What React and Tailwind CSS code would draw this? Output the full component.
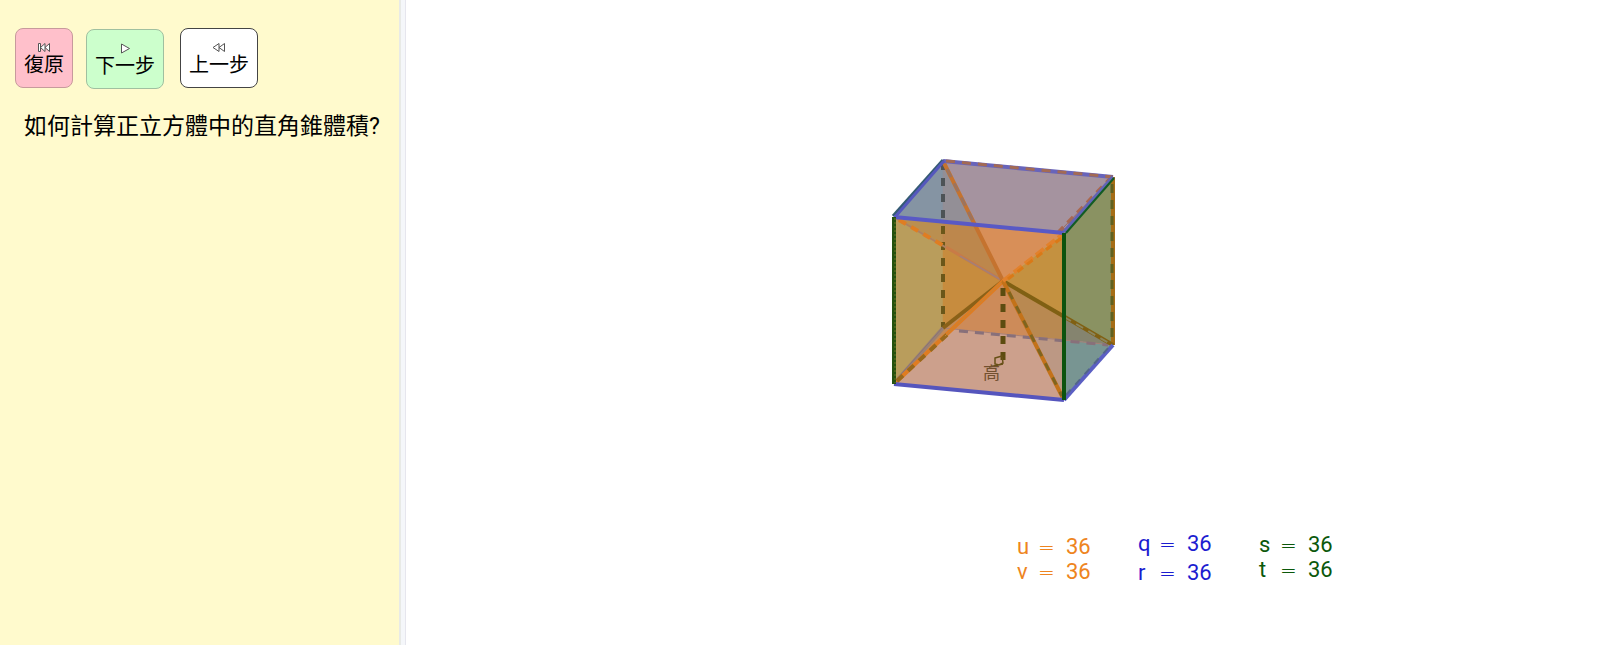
const steps = [
  { label: '復原',   icon: 'start', style: 'bg-[#ffc0cb] border-[#c79a9c]' },
  { label: '下一步', icon: 'play',  style: 'bg-[#ccffcc] border-[#a0c0a0] ml-[13px] mt-px' },
  { label: '上一步', icon: 'back',  style: 'bg-white border-[#444444] ml-4' },
]

const iconPaths = {
  start: 'M1.500 1.500v8h2v-8zM8 1.500v8l-4.500-4zM12.500 1.500v8l-4.500-4z',
  play: 'M3.500 1l8 4.500-8 4.500z',
  back: 'M7 1.500v8l-6-4zM12.500 1.500v8l-5.500-4z',
}

const volumes = [
  { color: 'text-[#ee8420]', style: 'mt-[3px] leading-[25px]', value: 'w-[25px]', names: ['u', 'v'] },
  { color: 'text-[#1c1cd0]', style: 'leading-[29px] -mt-[2px]', value: 'w-[25px]', names: ['q', 'r'] },
  { color: 'text-[#0b580b]', style: 'mt-px leading-[25px]', value: 'w-[25px]', names: ['s', 't'] },
]

// flat colour of every region left by the overlapping pyramids
const faces = [
  ['943,161 894,217 943,222', '#8594a3'],
  ['943,161 943,222 975,225', '#938f96'],
  ['943,161 975,225 1064,233 1113,177', '#a5939f'],
  ['894,217 943,222 943,245', '#ba8f50'],
  ['943,222 975,225 1003,281 943,245', '#bd874c'],
  ['975,225 1064,233 1003,281', '#d88f58'],
  ['894,217 943,245 943,328 894,384', '#b99d5c'],
  ['943,245 1003,281 943,328', '#c78c3e'],
  ['943,328 1003,281 952,329 894,384', '#c38a55'],
  ['1064,233 1064,316 1003,281', '#c49140'],
  ['1003,281 952,329 1032,337', '#cd8b59'],
  ['952,329 1032,337 1064,400 894,384', '#cca08c'],
  ['1003,281 1064,316 1064,340 1032,337', '#b98951'],
  ['1032,337 1064,340 1064,400', '#bc9884'],
  ['1064,233 1113,177 1113,345 1064,316', '#8a9262'],
  ['1064,316 1113,345 1064,340', '#85846f'],
  ['1064,340 1113,345 1064,400', '#789592'],
]

// points, colour, width, dash
const edges = [
  ['943,162 943,222', '#4d5356', 4, '8 8'],
  ['943,226 943,328', '#6b5719', 4, '8 8'],
  ['943,328 1113,345', '#a77f75', 1],
  ['959,331 1108,345', '#88707a', 3, '9 7'],
  ['894,384 943,328', '#9b8173', 4],
  ['896,380 943,327', '#887378', 1],
  ['1113,177 1113,345', '#a56d16', 4],
  ['1112,184 1112,345', '#606120', 3, '9 7'],
  ['894,217 1003,281', '#ae8060', 2],
  ['899,220 946,247', '#df7d22', 4, '8 6'],
  ['946,247 1003,281', '#c97b46', 3],
  ['960,256 1003,281', '#a67f74', 2],
  ['943,161 1003,281', '#c5732f', 4],
  ['947,169 974,223', '#9d735d', 3, '9 7'],
  ['943,328 1003,281', '#8a6118', 4],
  ['894,384 1003,281', '#df7c21', 4],
  ['897,381 950,332', '#98681c', 4, '8 7'],
  ['945,336 1003,281', '#c68438', 1],
  ['1003,281 1113,345', '#806013', 4],
  ['1064,317 1109,343', '#8a855c', 2, '8 6'],
  ['1003,281 1064,400', '#c37219', 4],
  ['1009,292 1062,396', '#7f641f', 3, '8 8'],
  ['1003,281 1064,233', '#e2812b', 4, '10 4'],
  ['1008,279 1064,236', '#da7917', 3, '7 5'],
  ['1058,233 1112,177', '#a9674e', 4, '8 6'],
  ['1058,233 1113,177', '#9b6864', 1],
  ['943,161 1113,177', '#6864ba', 4],
  ['946,161 1113,177', '#a36a54', 3, '9 7'],
  ['893,216 943,160', '#345b73', 3],
  ['895,217 944,161', '#5558bd', 3],
  ['894,217 1064,233', '#5959c5', 4],
  ['1064,232 1113,177', '#6264b5', 4],
  ['1066,233 1114,178', '#125c23', 2],
  ['894,384 1064,400', '#5555bd', 4],
  ['1064,400 1113,345', '#5b5fc3', 4],
  ['1066,395 1110,346', '#52658a', 2, '7 7'],
  ['894,217 894,384', '#24510e', 4],
  ['895,218 895,383', '#69701f', 1, '2 2'],
  ['1064,233 1064,400', '#0c530e', 4],
  ['1003,288 1003,360', '#5c4c10', 5, '8 8'],
]

function StepButton({ label, icon, style }) {
  return (
    <button className={`h-[60px] px-2 pt-[13px] rounded-lg border flex flex-col items-center text-xl leading-6 ${style}`}>
      <svg width="14" height="11" viewBox="0 0 14 11" fill="white" stroke="#555" strokeWidth="1" aria-hidden="true">
        <path d={iconPaths[icon]} />
      </svg>
      {label}
    </button>
  )
}

function Cube() {
  return (
    <svg width="226" height="250" viewBox="890 155 226 250" role="img" aria-label="正立方體">
      {faces.map(([points, fill]) => (
        <polygon key={points} points={points} fill={fill} stroke={fill} strokeWidth="0.5" />
      ))}
      {edges.map(([points, stroke, width, dash], i) => (
        <polyline key={i} points={points} fill="none" stroke={stroke} strokeWidth={width} strokeDasharray={dash} />
      ))}
      <path d="M995 358l7-2 1 7-4 2-4-1zM989 367l14-3" fill="none" stroke="#675017" strokeWidth="1.500" />
      <text x="983" y="379" fontSize="17" fill="#72502f">高</text>
    </svg>
  )
}

export default function App() {
  return (
    <div className="min-h-screen flex items-start bg-white text-black font-['Roboto','Noto_Sans_CJK_TC',sans-serif]">
      <aside className="w-[399px] h-[calc(100vh-2px)] shrink-0 bg-[#fffacd] pl-[15px] pt-7">
        <div className="flex items-start">
          {steps.map((step) => <StepButton key={step.label} {...step} />)}
        </div>
        <p className="mt-[22px] ml-[9px] text-[23px] leading-8">如何計算正立方體中的直角錐體積?</p>
      </aside>
      <div className="w-[7px] h-[calc(100vh-2px)] shrink-0 bg-[#f5f7fa] border-l-2 border-r border-l-[#e8eae6] border-r-[#e6e6ee]" />
      <main className="flex-1 flex flex-col items-center pt-[155px]">
        <Cube />
        <div className="mt-[126px] ml-[344px] flex items-start gap-[47px] text-[22px]">
          {volumes.map(({ color, style, value, names }) => (
            <table key={color} className={`${color} ${style}`}>
              <tbody>
                {names.map((name) => (
                  <tr key={name}>
                    <td className="w-[21px]">{name}</td>
                    <td className="w-[28px] text-xl leading-5 font-extralight font-['DejaVu_Sans',sans-serif]">=</td>
                    <td className={value}>36</td>
                  </tr>
                ))}
              </tbody>
            </table>
          ))}
        </div>
      </main>
    </div>
  )
}
